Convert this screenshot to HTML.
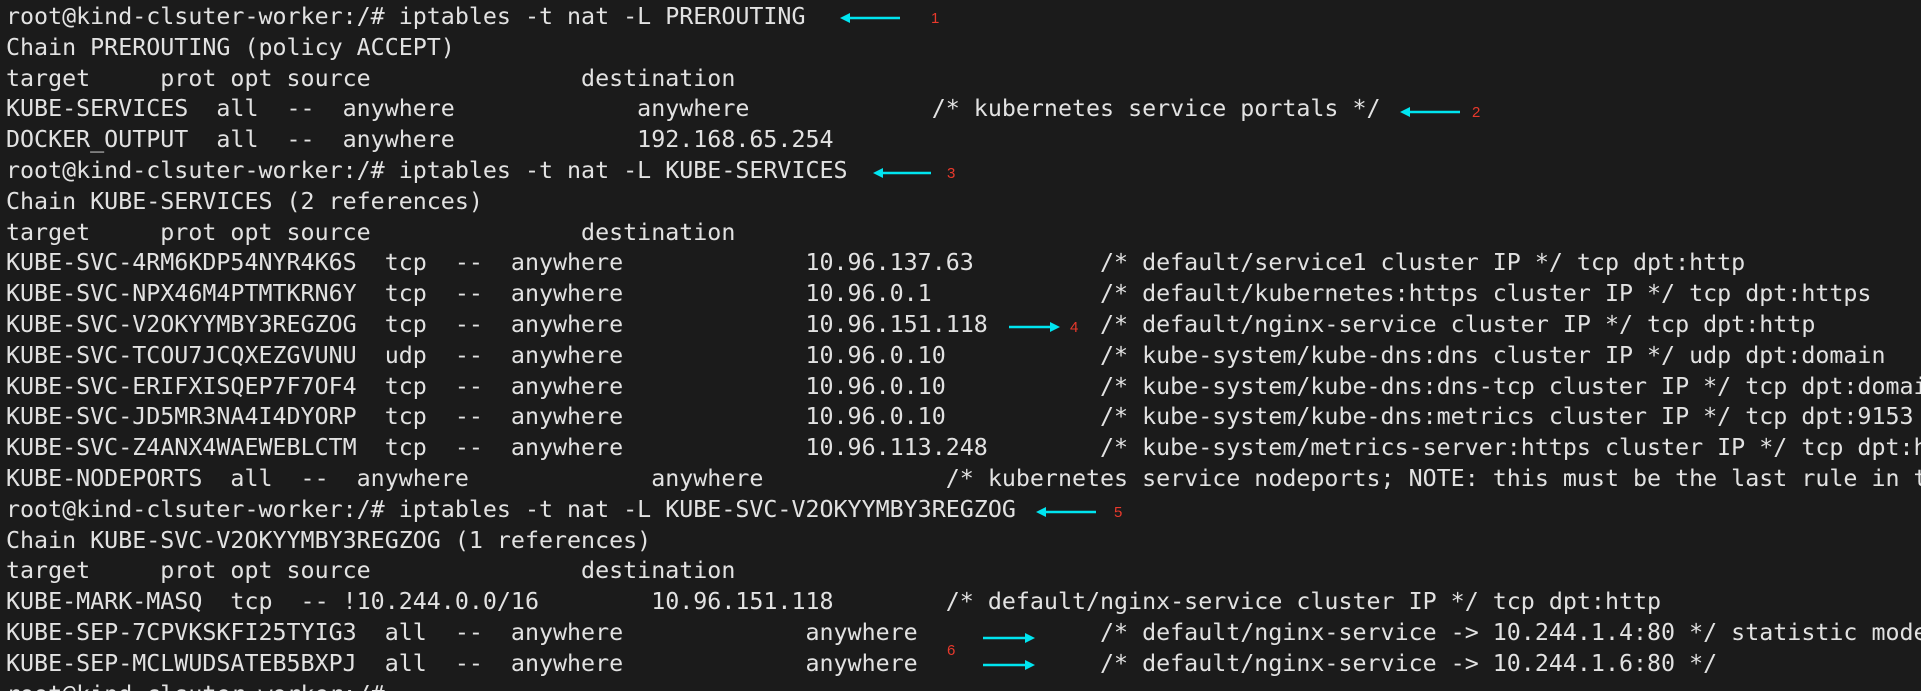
<!DOCTYPE html>
<html><head><meta charset="utf-8"><style>
html,body{margin:0;padding:0;background:#1b1b1b;width:1921px;height:691px;overflow:hidden}
#w{position:relative;width:1921px;height:691px;overflow:hidden;background:#1b1b1b}
pre{position:absolute;left:6px;top:2px;margin:0;font-family:"DejaVu Sans Mono","Liberation Mono",monospace;font-size:23.3px;line-height:30.8px;color:#e2e2e2;white-space:pre}
.n{position:absolute;font-family:"Liberation Sans",sans-serif;font-size:15px;color:#e8392c;line-height:1}
svg{position:absolute;left:0;top:0}
</style></head><body><div id="w">
<pre>root@kind-clsuter-worker:/# iptables -t nat -L PREROUTING
Chain PREROUTING (policy ACCEPT)
target     prot opt source               destination
KUBE-SERVICES  all  --  anywhere             anywhere             /* kubernetes service portals */
DOCKER_OUTPUT  all  --  anywhere             192.168.65.254
root@kind-clsuter-worker:/# iptables -t nat -L KUBE-SERVICES
Chain KUBE-SERVICES (2 references)
target     prot opt source               destination
KUBE-SVC-4RM6KDP54NYR4K6S  tcp  --  anywhere             10.96.137.63         /* default/service1 cluster IP */ tcp dpt:http
KUBE-SVC-NPX46M4PTMTKRN6Y  tcp  --  anywhere             10.96.0.1            /* default/kubernetes:https cluster IP */ tcp dpt:https
KUBE-SVC-V2OKYYMBY3REGZOG  tcp  --  anywhere             10.96.151.118        /* default/nginx-service cluster IP */ tcp dpt:http
KUBE-SVC-TCOU7JCQXEZGVUNU  udp  --  anywhere             10.96.0.10           /* kube-system/kube-dns:dns cluster IP */ udp dpt:domain
KUBE-SVC-ERIFXISQEP7F7OF4  tcp  --  anywhere             10.96.0.10           /* kube-system/kube-dns:dns-tcp cluster IP */ tcp dpt:domai
KUBE-SVC-JD5MR3NA4I4DYORP  tcp  --  anywhere             10.96.0.10           /* kube-system/kube-dns:metrics cluster IP */ tcp dpt:9153
KUBE-SVC-Z4ANX4WAEWEBLCTM  tcp  --  anywhere             10.96.113.248        /* kube-system/metrics-server:https cluster IP */ tcp dpt:h
KUBE-NODEPORTS  all  --  anywhere             anywhere             /* kubernetes service nodeports; NOTE: this must be the last rule in t
root@kind-clsuter-worker:/# iptables -t nat -L KUBE-SVC-V2OKYYMBY3REGZOG
Chain KUBE-SVC-V2OKYYMBY3REGZOG (1 references)
target     prot opt source               destination
KUBE-MARK-MASQ  tcp  -- !10.244.0.0/16        10.96.151.118        /* default/nginx-service cluster IP */ tcp dpt:http
KUBE-SEP-7CPVKSKFI25TYIG3  all  --  anywhere             anywhere             /* default/nginx-service -&gt; 10.244.1.4:80 */ statistic mode
KUBE-SEP-MCLWUDSATEB5BXPJ  all  --  anywhere             anywhere             /* default/nginx-service -&gt; 10.244.1.6:80 */
root@kind-clsuter-worker:/#</pre>
<svg width="1921" height="691" viewBox="0 0 1921 691">
<g stroke="#00e5f0" stroke-width="2.5" fill="#00e5f0">
<line x1="848" y1="18" x2="900" y2="18"/><polygon points="840,18 850,13 850,23" stroke="none"/>
<line x1="1408" y1="112" x2="1460" y2="112"/><polygon points="1400,112 1410,107 1410,117" stroke="none"/>
<line x1="881" y1="173" x2="931" y2="173"/><polygon points="873,173 883,168 883,178" stroke="none"/>
<line x1="1009" y1="327" x2="1052" y2="327"/><polygon points="1060,327 1050,322 1050,332" stroke="none"/>
<line x1="1044" y1="512" x2="1096" y2="512"/><polygon points="1036,512 1046,507 1046,517" stroke="none"/>
<line x1="983" y1="638" x2="1027" y2="638"/><polygon points="1035,638 1025,633 1025,643" stroke="none"/>
<line x1="983" y1="665" x2="1027" y2="665"/><polygon points="1035,665 1025,660 1025,670" stroke="none"/>
</g></svg>
<div class="n" style="left:931px;top:11px">1</div>
<div class="n" style="left:1472px;top:105px">2</div>
<div class="n" style="left:947px;top:166px">3</div>
<div class="n" style="left:1070px;top:320px">4</div>
<div class="n" style="left:1114px;top:505px">5</div>
<div class="n" style="left:947px;top:643px">6</div>
</div></body></html>
